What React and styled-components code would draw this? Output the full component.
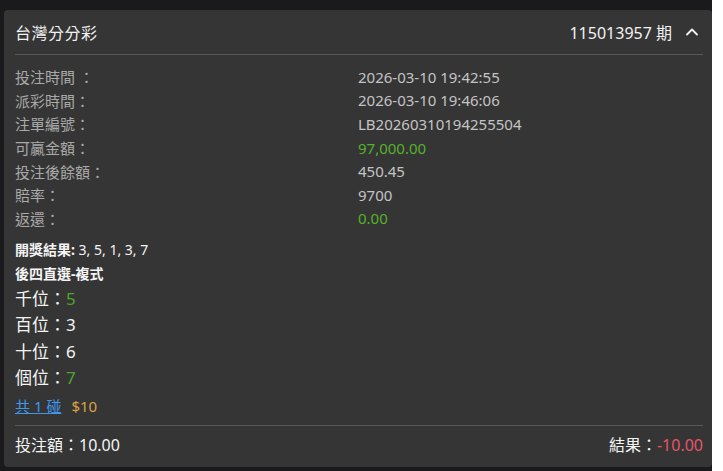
import React from 'react'
import styled, { createGlobalStyle } from 'styled-components'
import { ChevronUp } from 'lucide-react'

const GlobalStyle = createGlobalStyle`
  html, body {
    margin: 0;
    padding: 0;
    background: #ffffff;
  }
  body {
    font-family: "Noto Sans", "Noto Sans CJK TC", sans-serif;
  }
`

const rows = [
  { label: '投注時間 ：', value: '2026-03-10 19:42:55' },
  { label: '派彩時間：', value: '2026-03-10 19:46:06' },
  { label: '注單編號：', value: 'LB20260310194255504' },
  { label: '可贏金額：', value: '97,000.00', tone: 'green' },
  { label: '投注後餘額：', value: '450.45' },
  { label: '賠率：', value: '9700' },
  { label: '返還：', value: '0.00', tone: 'green' },
]

const digits = [
  { pos: '千位', num: '5', hit: true },
  { pos: '百位', num: '3' },
  { pos: '十位', num: '6' },
  { pos: '個位', num: '7', hit: true },
]

const App = () => {
  return (
    <Wrapper>
      <GlobalStyle />
      <Card>
        <Header>
          <Title>台灣分分彩</Title>
          <Issue>
            115013957 期
            <ChevronUp size={20} strokeWidth={2.2} />
          </Issue>
        </Header>
        <Divider />

        <InfoList>
          {rows.map((r) => (
            <InfoRow key={r.label}>
              <Label>{r.label}</Label>
              <Value tone={r.tone}>{r.value}</Value>
            </InfoRow>
          ))}
        </InfoList>

        <Detail>
          <BoldLine>
            <b>開獎結果:</b> 3, 5, 1, 3, 7
          </BoldLine>
          <BoldLine>
            <b>後四直選-複式</b>
          </BoldLine>
          {digits.map((d) => (
            <DigitLine key={d.pos}>
              {d.pos}：<Num hit={d.hit}>{d.num}</Num>
            </DigitLine>
          ))}
          <CountLine>
            <CountLink href="#">共 1 碰</CountLink>
            <Price>$10</Price>
          </CountLine>
        </Detail>

        <Divider />
        <Footer>
          <span>投注額：10.00</span>
          <span>
            結果：<Loss>-10.00</Loss>
          </span>
        </Footer>
      </Card>
    </Wrapper>
  )
}

const Wrapper = styled.div`
  width: 712px;
  height: 471px;
  box-sizing: border-box;
  padding: 10px 0 4px 4px;
  background: #1a1a1c;
`

const Card = styled.section`
  height: 457px;
  box-sizing: border-box;
  padding: 0 9px 0 11px;
  background: #353535;
  border-radius: 4px;
  display: flex;
  flex-direction: column;
`

const Header = styled.div`
  height: 44px;
  display: flex;
  align-items: center;
  justify-content: space-between;
  color: #f2f2f2;
  font-size: 16px;
  padding-bottom: 1px;
  box-sizing: border-box;
`

const Title = styled.div`
  letter-spacing: 0.5px;
`

const Issue = styled.div`
  display: flex;
  align-items: center;
  gap: 10px;
  margin-right: 1px;

  svg {
    color: #f2f2f2;
  }
`

const Divider = styled.div`
  height: 1px;
  background: #585858;
`

const InfoList = styled.div`
  padding-top: 10px;
  display: flex;
  flex-direction: column;
`

const InfoRow = styled.div`
  display: grid;
  grid-template-columns: 343px 1fr;
  height: 23.6px;
  align-items: center;
  font-size: 15px;
`

const Label = styled.span`
  color: #a9a9a9;
`

const Value = styled.span`
  color: ${({ tone }) => (tone === 'green' ? '#56b12a' : '#c4c4c4')};
`

const Detail = styled.div`
  padding-top: 8px;
  display: flex;
  flex-direction: column;
  color: #f4f4f4;
`

const BoldLine = styled.div`
  font-size: 14px;
  line-height: 24px;

  b {
    font-weight: 700;
  }
`

const DigitLine = styled.div`
  font-size: 17px;
  line-height: 26.3px;
`

const Num = styled.span`
  color: ${({ hit }) => (hit ? '#4fa52a' : '#f4f4f4')};
`

const CountLine = styled.div`
  display: flex;
  gap: 10px;
  font-size: 15px;
  line-height: 26px;
  margin-top: 2px;
  margin-bottom: 6px;
`

const CountLink = styled.a`
  color: #3f97ee;
  text-decoration: underline;
`

const Price = styled.span`
  color: #d9a441;
`

const Footer = styled.div`
  height: 35px;
  display: flex;
  align-items: center;
  justify-content: space-between;
  font-size: 16px;
  color: #f4f4f4;
`

const Loss = styled.span`
  color: #e8546a;
`

export default App
